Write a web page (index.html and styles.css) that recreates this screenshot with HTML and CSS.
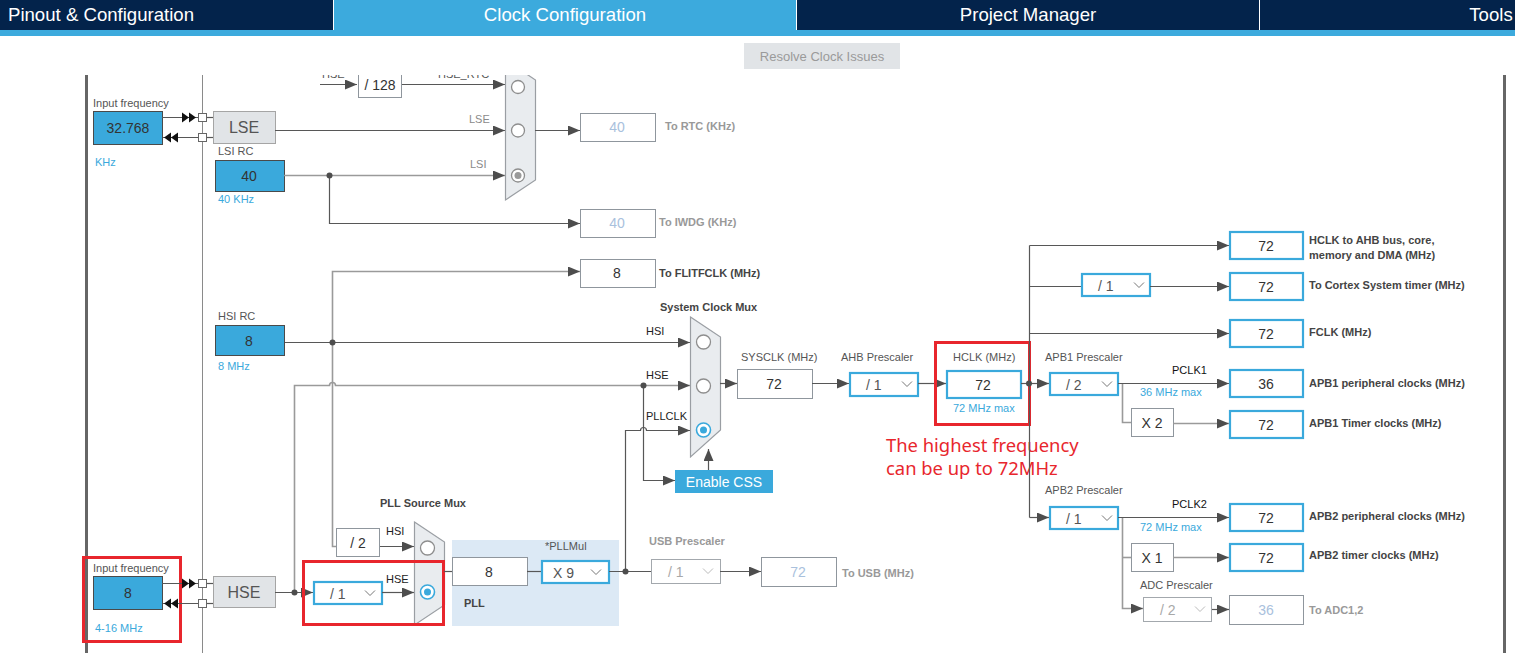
FILE: index.html
```html
<!DOCTYPE html>
<html>
<head>
<meta charset="utf-8">
<title>Clock Configuration</title>
<link rel="stylesheet" href="styles.css">
</head>
<body>
<nav class="tabs">
  <div class="tab tab-first">Pinout &amp; Configuration</div>
  <div class="tab tab-active">Clock Configuration</div>
  <div class="tab">Project Manager</div>
  <div class="tab">Tools</div>
</nav>
<div class="toolbar">
  <button class="resolve">Resolve Clock Issues</button>
</div>
<main class="diagram">
<svg class="canvas" viewBox="0 75 1515 578" width="1515" height="578">
  <defs>
    <marker id="ar" viewBox="0 0 12 10" refX="12" refY="5" markerWidth="12" markerHeight="10" markerUnits="userSpaceOnUse" orient="auto">
      <path d="M0,0L12,5L0,10z" class="ah"/>
    </marker>
  </defs>

  <!-- frame -->
  <rect class="frame" x="85" y="75" width="3" height="578"/>
  <rect class="frame" x="1503" y="75" width="3" height="578"/>
  <path class="thin" d="M202.5,75V653"/>

  <!-- ===== LSE / LSI / RTC ===== -->
  <text class="lbl" x="322" y="78">HSE</text>
  <text class="lbl" x="438" y="78">HSE_RTC</text>
  <path class="ln" d="M320,84.5H357" marker-end="url(#ar)"/>
  <rect class="box" x="358.5" y="70.5" width="43" height="27"/>
  <text class="val" x="380" y="90">/ 128</text>
  <path class="ln" d="M402,84.5H505" marker-end="url(#ar)"/>

  <text class="lbl" x="93" y="107">Input frequency</text>
  <rect class="inp" x="93.5" y="111.5" width="69" height="33"/>
  <text class="val" x="128" y="133">32.768</text>
  <text class="blu" x="95" y="166">KHz</text>

  <path class="ln" d="M162,117.5H198"/>
  <path class="ln" d="M163,137.5H198"/>
  <polygon class="dbl" points="182,112.5 189,117.5 182,122.5"/>
  <polygon class="dbl" points="189,112.5 196,117.5 189,122.5"/>
  <polygon class="dbl" points="178,132.5 171,137.5 178,142.5"/>
  <polygon class="dbl" points="171,132.5 164,137.5 171,142.5"/>
  <path class="ln" d="M206,117.5H213"/>
  <path class="ln" d="M206,137.5H213"/>
  <rect class="sq" x="198.5" y="113.5" width="8" height="8"/>
  <rect class="sq" x="198.5" y="133.5" width="8" height="8"/>

  <rect class="gbox" x="213.5" y="111.5" width="62" height="32"/>
  <text class="big" x="244" y="133">LSE</text>

  <text class="lbl" x="218" y="155">LSI RC</text>
  <rect class="inp" x="215.5" y="160.5" width="69" height="31"/>
  <text class="val" x="249" y="181">40</text>
  <text class="blu" x="218" y="203">40 KHz</text>

  <text class="lbl lgt" x="469" y="123">LSE</text>
  <path class="ln" d="M275,130.5H505" marker-end="url(#ar)"/>
  <text class="lbl lgt" x="470" y="168">LSI</text>
  <path class="lg" d="M284,175.5H505" marker-end="url(#ar)"/>
  <path class="ln" d="M329.5,175.5V223.5H580" marker-end="url(#ar)"/>
  <circle class="dot" cx="329.5" cy="175.5" r="3"/>

  <polygon class="mux" points="505.5,60 535.5,80 535.5,180 505.5,200"/>
  <circle class="rad" cx="518" cy="87" r="6.5"/>
  <circle class="rad" cx="518" cy="130.5" r="6.5"/>
  <circle class="rad" cx="518" cy="175.5" r="6.5"/>
  <circle class="radg" cx="518" cy="175.5" r="3.5"/>
  <path class="ln" d="M535,130.5H580" marker-end="url(#ar)"/>

  <rect class="box" x="580.5" y="113.5" width="75" height="28"/>
  <text class="val dis" x="617" y="132">40</text>
  <text class="blab gry" x="665" y="130">To RTC (KHz)</text>
  <rect class="box" x="580.5" y="209.5" width="75" height="28"/>
  <text class="val dis" x="617" y="228">40</text>
  <text class="blab gry" x="659" y="226">To IWDG (KHz)</text>

  <!-- ===== HSI ===== -->
  <path class="lg" d="M336,546.5H332.5V271.5H580" marker-end="url(#ar)"/>
  <rect class="box" x="580.5" y="259.5" width="75" height="28"/>
  <text class="val" x="617" y="278">8</text>
  <text class="blab" x="659" y="277">To FLITFCLK (MHz)</text>

  <text class="lbl" x="218" y="320">HSI RC</text>
  <rect class="inp" x="215.5" y="325.5" width="69" height="30"/>
  <text class="val" x="249" y="346">8</text>
  <text class="blu" x="218" y="370">8 MHz</text>

  <path class="ln" d="M285,342.5H690" marker-end="url(#ar)"/>
  <circle class="dot" cx="332.5" cy="342.5" r="3"/>
  <text class="lbl dk" x="646" y="335">HSI</text>

  <path class="lg" d="M294.5,592V385.5H329.5a3,3 0 0 1 6,0H690" marker-end="url(#ar)"/>
  <text class="lbl dk" x="646" y="379">HSE</text>
  <path class="ln" d="M643.5,385.5V480.5H675" marker-end="url(#ar)"/>
  <circle class="dot" cx="643.5" cy="385.5" r="3"/>

  <path class="ln" d="M625.5,571V430.5H640.5a3,3 0 0 1 6,0H690" marker-end="url(#ar)"/>
  <text class="lbl dk" x="646" y="420">PLLCLK</text>

  <text class="blab" x="660" y="311">System Clock Mux</text>
  <polygon class="mux" points="690.5,317 720.5,337 720.5,430 690.5,457"/>
  <circle class="rad" cx="703.5" cy="342" r="7"/>
  <circle class="rad" cx="703.5" cy="386" r="7"/>
  <circle class="radb" cx="703.5" cy="430" r="7"/>
  <circle class="radbd" cx="703.5" cy="430" r="3.5"/>
  <path class="ln" d="M708.5,470V449" marker-end="url(#ar)"/>

  <rect class="css" x="675" y="470" width="98" height="23"/>
  <text class="csst" x="724" y="487">Enable CSS</text>

  <path class="ln" d="M720,383.5H737" marker-end="url(#ar)"/>
  <text class="lbl" x="741" y="361">SYSCLK (MHz)</text>
  <rect class="box" x="737.5" y="369.5" width="75" height="29"/>
  <text class="val" x="774" y="389">72</text>
  <path class="ln" d="M812,383.5H849" marker-end="url(#ar)"/>

  <text class="lbl" x="841" y="361">AHB Prescaler</text>
  <rect class="sel" x="850" y="373" width="68" height="23"/>
  <text class="selt" x="866" y="390">/ 1</text>
  <path class="chev" d="M902,381.5l5,5l5,-5"/>
  <path class="ln" d="M918,383.5H946" marker-end="url(#ar)"/>

  <text class="lbl" x="953" y="361">HCLK (MHz)</text>
  <rect class="bbox" x="947" y="371" width="74" height="27"/>
  <text class="val" x="983" y="390">72</text>
  <text class="blu" x="953" y="412">72 MHz max</text>
  <rect class="redbox" x="935.5" y="342.5" width="94" height="82"/>

  <text class="note" x="886" y="452">The highest frequency</text>
  <text class="note" x="886" y="475">can be up to 72MHz</text>

  <!-- ===== HCLK outputs ===== -->
  <path class="ln" d="M1021,383.5H1049" marker-end="url(#ar)"/>
  <path class="ln" d="M1029.5,245.5V517.5"/>
  <circle class="dot" cx="1029" cy="383.5" r="3"/>

  <path class="ln" d="M1029.5,245.5H1229" marker-end="url(#ar)"/>
  <rect class="bbox" x="1230" y="232" width="73" height="27"/>
  <text class="val" x="1266" y="251">72</text>
  <text class="blab" x="1309" y="244">HCLK to AHB bus, core,</text>
  <text class="blab" x="1309" y="259">memory and DMA (MHz)</text>

  <path class="ln" d="M1029.5,286.5H1081"/>
  <rect class="sel" x="1082" y="274" width="68" height="22"/>
  <text class="selt" x="1098" y="291">/ 1</text>
  <path class="chev" d="M1134,282.5l5,5l5,-5"/>
  <path class="ln" d="M1150,286.5H1229" marker-end="url(#ar)"/>
  <rect class="bbox" x="1230" y="273" width="73" height="27"/>
  <text class="val" x="1266" y="292">72</text>
  <text class="blab" x="1309" y="289">To Cortex System timer (MHz)</text>

  <path class="ln" d="M1029.5,333.5H1229" marker-end="url(#ar)"/>
  <rect class="bbox" x="1230" y="320" width="73" height="27"/>
  <text class="val" x="1266" y="339">72</text>
  <text class="blab" x="1309" y="336">FCLK (MHz)</text>

  <text class="lbl" x="1045" y="361">APB1 Prescaler</text>
  <rect class="sel" x="1050" y="373" width="68" height="22"/>
  <text class="selt" x="1066" y="390">/ 2</text>
  <path class="chev" d="M1102,381.5l5,5l5,-5"/>
  <path class="ln" d="M1118,383.5H1229" marker-end="url(#ar)"/>
  <text class="lbl blk" x="1172" y="374">PCLK1</text>
  <text class="blu" x="1140" y="396">36 MHz max</text>
  <rect class="bbox" x="1230" y="370" width="73" height="27"/>
  <text class="val" x="1266" y="389">36</text>
  <text class="blab" x="1309" y="387">APB1 peripheral clocks (MHz)</text>

  <path class="lg" d="M1122.5,384V422.5H1131"/>
  <rect class="box" x="1131.5" y="408.5" width="42" height="28"/>
  <text class="val" x="1152" y="428">X 2</text>
  <path class="lg" d="M1173,423.5H1229" marker-end="url(#ar)"/>
  <rect class="bbox" x="1230" y="411" width="73" height="27"/>
  <text class="val" x="1266" y="430">72</text>
  <text class="blab" x="1309" y="427">APB1 Timer clocks (MHz)</text>

  <path class="ln" d="M1029.5,517.5H1049" marker-end="url(#ar)"/>
  <text class="lbl" x="1045" y="494">APB2 Prescaler</text>
  <rect class="sel" x="1050" y="507" width="68" height="22"/>
  <text class="selt" x="1066" y="524">/ 1</text>
  <path class="chev" d="M1102,515.5l5,5l5,-5"/>
  <path class="ln" d="M1118,517.5H1229" marker-end="url(#ar)"/>
  <text class="lbl blk" x="1172" y="508">PCLK2</text>
  <text class="blu" x="1140" y="531">72 MHz max</text>
  <rect class="bbox" x="1230" y="504" width="73" height="27"/>
  <text class="val" x="1266" y="523">72</text>
  <text class="blab" x="1309" y="520">APB2 peripheral clocks (MHz)</text>

  <path class="lg" d="M1122.5,518V608.5H1143" marker-end="url(#ar)"/>
  <path class="lg" d="M1122.5,557.5H1131"/>
  <rect class="box" x="1131.5" y="543.5" width="42" height="28"/>
  <text class="val" x="1152" y="563">X 1</text>
  <path class="lg" d="M1173,557.5H1229" marker-end="url(#ar)"/>
  <rect class="bbox" x="1230" y="544" width="73" height="27"/>
  <text class="val" x="1266" y="563">72</text>
  <text class="blab" x="1309" y="559">APB2 timer clocks (MHz)</text>

  <text class="lbl" x="1140" y="589">ADC Prescaler</text>
  <rect class="selg" x="1143.5" y="597.5" width="68" height="24"/>
  <text class="selt dis2" x="1160" y="615">/ 2</text>
  <path class="chev lgtc" d="M1195,606.5l5,5l5,-5"/>
  <path class="ln" d="M1212,609.5H1229" marker-end="url(#ar)"/>
  <rect class="box" x="1229.5" y="595.5" width="74" height="29"/>
  <text class="val dis" x="1266" y="615">36</text>
  <text class="blab gry" x="1309" y="614">To ADC1,2</text>

  <!-- ===== HSE / PLL ===== -->
  <text class="lbl" x="93" y="572">Input frequency</text>
  <rect class="inp" x="93.5" y="576.5" width="69" height="33"/>
  <text class="val" x="128" y="598">8</text>
  <text class="blu" x="95" y="632">4-16 MHz</text>
  <rect class="redbox" x="83.5" y="557.5" width="97" height="84"/>

  <path class="ln" d="M162,583.5H198"/>
  <path class="ln" d="M163,603.5H198"/>
  <polygon class="dbl" points="182,578.5 189,583.5 182,588.5"/>
  <polygon class="dbl" points="189,578.5 196,583.5 189,588.5"/>
  <polygon class="dbl" points="178,598.5 171,603.5 178,608.5"/>
  <polygon class="dbl" points="171,598.5 164,603.5 171,608.5"/>
  <path class="ln" d="M206,583.5H213"/>
  <path class="ln" d="M206,603.5H213"/>
  <rect class="sq" x="198.5" y="579.5" width="8" height="8"/>
  <rect class="sq" x="198.5" y="599.5" width="8" height="8"/>

  <rect class="gbox" x="213.5" y="576.5" width="62" height="31"/>
  <text class="big" x="244" y="598">HSE</text>

  <path class="ln" d="M275,592.5H313" marker-end="url(#ar)"/>
  <circle class="dot" cx="294.5" cy="592.5" r="3"/>

  <rect class="sel" x="314" y="582" width="68" height="22"/>
  <text class="selt" x="330" y="599">/ 1</text>
  <path class="chev" d="M365,590.5l5,5l5,-5"/>
  <path class="ln" d="M382,592.5H414" marker-end="url(#ar)"/>
  <text class="lbl dk" x="386" y="583">HSE</text>

  <rect class="box" x="336.5" y="528.5" width="43" height="28"/>
  <text class="val" x="358" y="548">/ 2</text>
  <path class="ln" d="M380,546.5H414" marker-end="url(#ar)"/>
  <text class="lbl dk" x="386" y="535">HSI</text>

  <text class="blab" x="380" y="507">PLL Source Mux</text>

  <rect class="pll" x="452" y="540" width="167" height="86"/>
  <text class="blab" x="464" y="607">PLL</text>
  <text class="lbl" x="545" y="550">*PLLMul</text>

  <polygon class="mux" points="414.5,522 444.5,542 444.5,605 414.5,625"/>
  <circle class="rad" cx="427.5" cy="548" r="7"/>
  <circle class="radb" cx="427.5" cy="592" r="7"/>
  <circle class="radbd" cx="427.5" cy="592" r="3.5"/>
  <rect class="redbox" x="303.5" y="561.5" width="140" height="63"/>

  <path class="ln" d="M444,571.5H452"/>
  <rect class="box" x="452.5" y="557.5" width="75" height="28"/>
  <text class="val" x="489" y="577">8</text>
  <path class="ln" d="M527,571.5H541"/>
  <rect class="sel" x="542" y="561" width="67" height="22"/>
  <text class="selt" x="553" y="578">X 9</text>
  <path class="chev" d="M591,569.5l5,5l5,-5"/>
  <path class="ln" d="M609,571.5H651"/>
  <circle class="dot" cx="625.5" cy="571.5" r="3"/>

  <text class="blab gry" x="649" y="545">USB Prescaler</text>
  <rect class="selg" x="651.5" y="559.5" width="69" height="24"/>
  <text class="selt dis2" x="668" y="577">/ 1</text>
  <path class="chev lgtc" d="M703,568.5l5,5l5,-5"/>
  <path class="ln" d="M720,571.5H761" marker-end="url(#ar)"/>
  <rect class="box" x="761.5" y="557.5" width="75" height="29"/>
  <text class="val dis" x="798" y="577">72</text>
  <text class="blab gry" x="842" y="577">To USB (MHz)</text>
</svg>
</main>
</body>
</html>
```

FILE: styles.css
```css
html, body {
  margin: 0;
  padding: 0;
  background: #ffffff;
  overflow: hidden;
}

body {
  width: 1515px;
  height: 653px;
  font-family: "Liberation Sans", Arial, sans-serif;
}

.tabs {
  display: flex;
  height: 30px;
  background: #03234b;
  border-bottom: 6px solid #3caadd;
  overflow: hidden;
  white-space: nowrap;
}

.tab {
  flex: none;
  width: 462px;
  line-height: 30px;
  font-size: 18.6px;
  color: #ffffff;
  text-align: center;
  border-left: 1px solid #ffffff;
}

.tab-first {
  width: 325px;
  padding-left: 8px;
  text-align: left;
  border-left: none;
}

.tab-active {
  background: #3caadd;
}

.toolbar {
  height: 39px;
  padding-top: 7px;
  box-sizing: border-box;
  padding-left: 744px;
}

.resolve {
  display: block;
  width: 156px;
  height: 26px;
  margin: 0;
  padding: 0;
  border: none;
  background: #e1e4e7;
  color: #9a9a9a;
  font-family: "Liberation Sans", Arial, sans-serif;
  font-size: 13px;
}

.diagram {
  display: block;
  height: 578px;
  overflow: hidden;
}

.canvas {
  display: block;
}

/* svg styles */
.frame { fill: #666666; }
.thin { fill: none; stroke: #8a8a8a; stroke-width: 1; }
.ln { fill: none; stroke: #575757; stroke-width: 1.2; }
.lg { fill: none; stroke: #9a9a9a; stroke-width: 1.6; }
.ah { fill: #4d4d4d; }
.dbl { fill: #111111; }
.dot { fill: #4d4d4d; }
.sq { fill: #ffffff; stroke: #666666; stroke-width: 1; }

.box { fill: #ffffff; stroke: #8f969d; stroke-width: 1; }
.bbox { fill: #ffffff; stroke: #3aa9dc; stroke-width: 2.2; }
.sel { fill: #ffffff; stroke: #3aa9dc; stroke-width: 2.2; }
.selg { fill: #ffffff; stroke: #a3a8ad; stroke-width: 1; }
.inp { fill: #3aa9dc; stroke: #4a4a4a; stroke-width: 1; }
.gbox { fill: #e1e4e7; stroke: #a5a5a5; stroke-width: 1; }
.pll { fill: #dce9f5; }
.mux { fill: #e9ecef; stroke: #9a9ea3; stroke-width: 1.2; }
.rad { fill: #ffffff; stroke: #8e8e8e; stroke-width: 1.3; }
.radg { fill: #9a9a9a; }
.radb { fill: #ffffff; stroke: #3aa9dc; stroke-width: 1.6; }
.radbd { fill: #3aa9dc; }
.redbox { fill: none; stroke: #e8262d; stroke-width: 3; }
.css { fill: #3aa9dc; }
.chev { fill: none; stroke: #777777; stroke-width: 1; }
.lgtc { stroke: #bbbbbb; }

.val {
  font-family: "Liberation Sans", Arial, sans-serif;
  font-size: 14px;
  fill: #333333;
  text-anchor: middle;
}
.val.dis { fill: #a9c1dd; }
.big {
  font-family: "Liberation Sans", Arial, sans-serif;
  font-size: 16px;
  fill: #555555;
  text-anchor: middle;
}
.selt {
  font-family: "Liberation Sans", Arial, sans-serif;
  font-size: 14px;
  fill: #555555;
}
.selt.dis2 { fill: #a8a8a8; }
.lbl {
  font-family: "Liberation Sans", Arial, sans-serif;
  font-size: 11px;
  fill: #555555;
}
.lbl.lgt { fill: #8a8a8a; }
.lbl.dk { fill: #222222; }
.lbl.blk { fill: #111111; }
.blu {
  font-family: "Liberation Sans", Arial, sans-serif;
  font-size: 11px;
  fill: #3aa9dc;
}
.blab {
  font-family: "Liberation Sans", Arial, sans-serif;
  font-size: 11px;
  font-weight: bold;
  fill: #444444;
}
.blab.gry { fill: #999999; }
.csst {
  font-family: "Liberation Sans", Arial, sans-serif;
  font-size: 14px;
  fill: #ffffff;
  text-anchor: middle;
}
.note {
  font-family: "Noto Sans", "Liberation Sans", sans-serif;
  font-size: 18.4px;
  fill: #e8262d;
}
```
